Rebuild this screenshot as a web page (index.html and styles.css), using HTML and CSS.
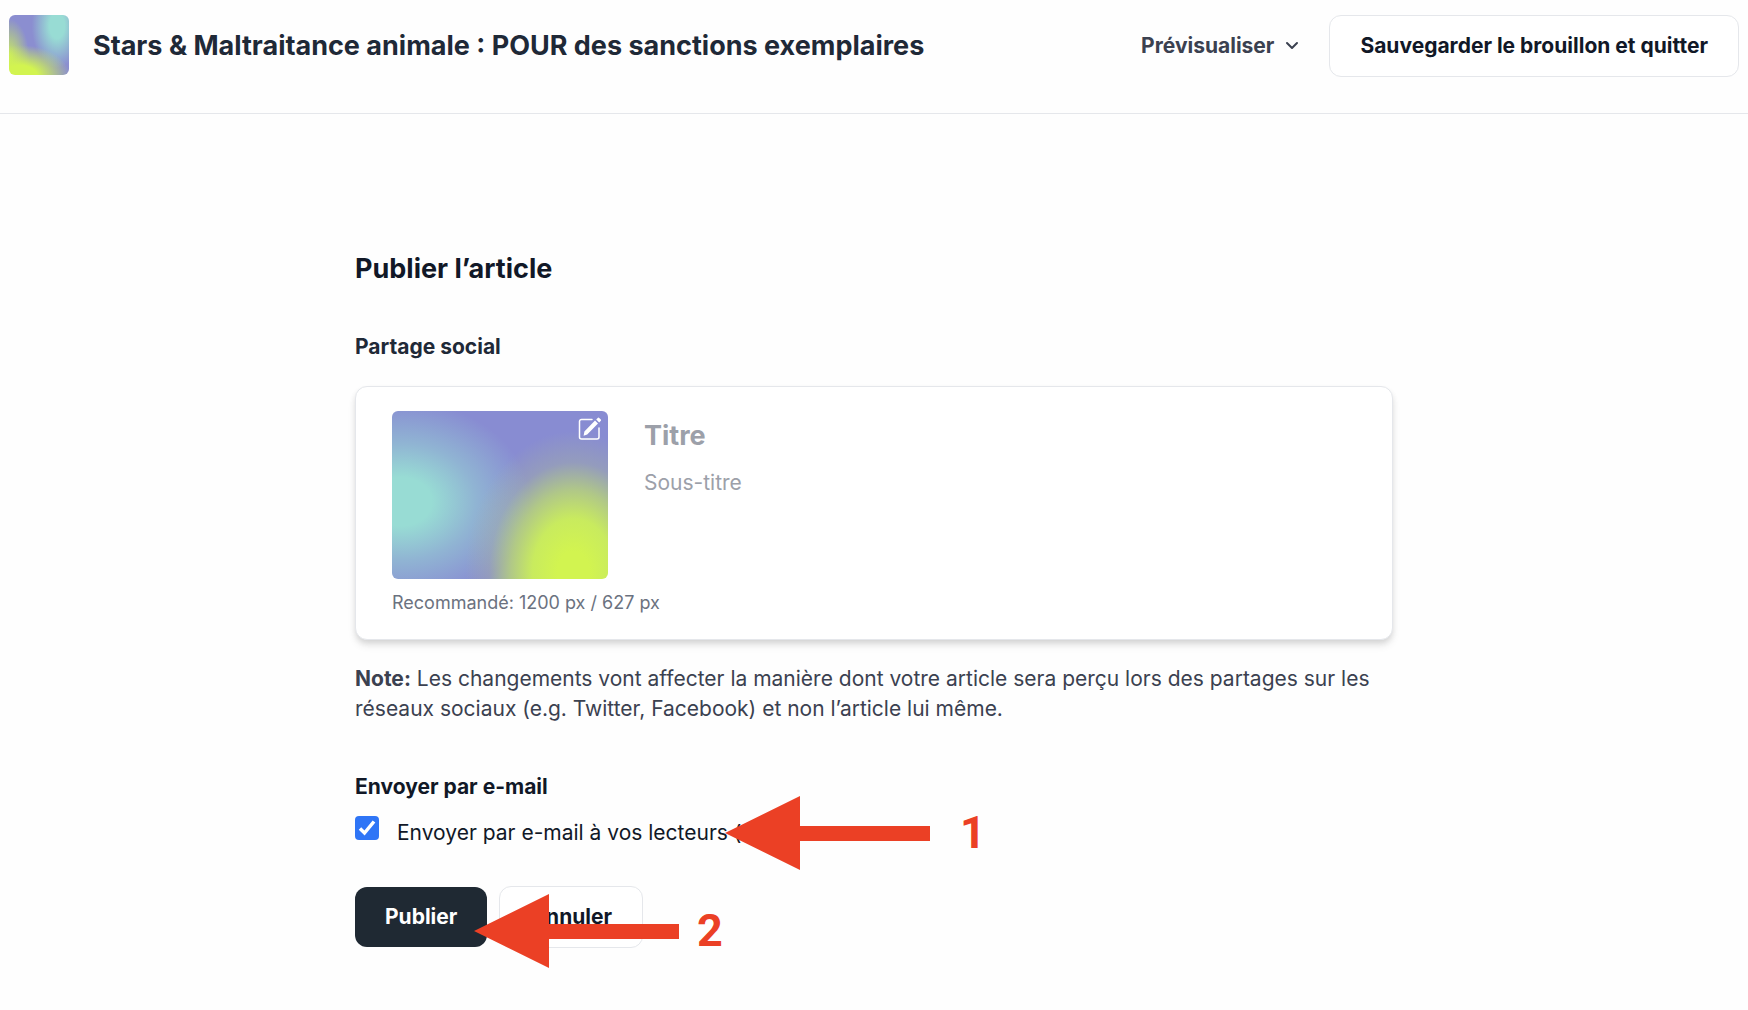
FILE: index.html
```
<!DOCTYPE html>
<html lang="fr">
<head>
    <meta charset="UTF-8">
    <meta name="viewport" content="width=device-width, initial-scale=1.0">
    <title>Publier l’article</title>
    <link rel="stylesheet" href="styles.css">
</head>
<body>

<header class="topbar">
    <div class="logo"></div>
    <h1>Stars &amp; Maltraitance animale : POUR des sanctions exemplaires</h1>
    <button type="button" class="preview-btn">
        Prévisualiser
        <svg class="chevron" viewBox="0 0 14 10" aria-hidden="true"><path d="M2 2l5 5 5-5"/></svg>
    </button>
    <button type="button" class="btn">Sauvegarder le brouillon et quitter</button>
</header>

<main>
    <h2>Publier l’article</h2>

    <!-- Partage social -->
    <h3 class="share-title">Partage social</h3>
    <section class="card">
        <div class="cover">
            <button type="button" class="edit-btn" aria-label="Modifier l’image">
                <svg viewBox="0 0 24 24" aria-hidden="true">
                    <path class="frame" d="M14 2.5H3.5a2 2 0 0 0-2 2V20a2 2 0 0 0 2 2H19a2 2 0 0 0 2-2V11"/>
                    <path class="pen" d="M17 3.6l3 3L9.2 17.4 5.6 18.8l.8-4.2zM18.2 2.4L20 .8q.6-.4 1.2.1l1.6 1.6q.6.6.1 1.2l-1.7 1.7z"/>
                </svg>
            </button>
        </div>
        <div class="fields">
            <input type="text" class="field-title" placeholder="Titre" aria-label="Titre">
            <input type="text" class="field-subtitle" placeholder="Sous-titre" aria-label="Sous-titre">
        </div>
        <p class="hint">Recommandé: 1200 px / 627 px</p>
    </section>
    <p class="note"><strong>Note:</strong> Les changements vont affecter la manière dont votre article sera perçu lors des partages sur les réseaux sociaux (e.g. Twitter, Facebook) et non l’article lui même.</p>

    <!-- Envoi par e-mail -->
    <h3 class="mail-title">Envoyer par e-mail</h3>
    <div class="mail-row">
        <input type="checkbox" id="sendMail" checked>
        <label for="sendMail">Envoyer par e-mail à vos lecteurs (</label>
        <div class="step step-mail">
            <svg class="arrow" viewBox="0 0 205 74" aria-hidden="true"><path d="M0 37L75 0v30h130v15H75v29z"/></svg>
            <span>1</span>
        </div>
    </div>

    <div class="actions">
        <button type="button" class="btn btn-dark">Publier</button>
        <button type="button" class="btn">Annuler</button>
        <div class="step step-publish">
            <svg class="arrow" viewBox="0 0 205 74" aria-hidden="true"><path d="M0 37L75 0v30h130v15H75v29z"/></svg>
            <span>2</span>
        </div>
    </div>
</main>

</body>
</html>
```

FILE: styles.css
```
* {
    box-sizing: border-box;
}

body {
    margin: 0;
    font-family: Inter, "Liberation Sans", sans-serif;
    font-size: 21px;
    line-height: 30px;
    color: #111827;
    background-color: #fefefe;
}

h1, h2, h3, p {
    margin: 0;
}

button, input {
    font-family: inherit;
    font-size: inherit;
    line-height: inherit;
    color: inherit;
}

/* 상단 바 */
.topbar {
    display: flex;
    align-items: center;
    padding: 15px 9px 36px;
    border-bottom: 1px solid #e5e7eb;
}

.topbar h1 {
    flex: 1;
    margin-left: 24px;
    font-size: 27px;
    line-height: 36px;
    font-weight: 700;
    color: #1f2937;
}

.logo {
    align-self: flex-start;
    width: 60px;
    height: 60px;
    border-radius: 6px;
    background:
        radial-gradient(ellipse 84% 52% at 18% 102%, #d2f450 35%, rgba(210, 244, 80, 0) 100%),
        radial-gradient(ellipse 34% 66% at 0% 72%, rgba(205, 240, 90, 0.9) 10%, rgba(190, 220, 120, 0) 100%),
        radial-gradient(ellipse 42% 70% at 80% 18%, #98dcd4 30%, rgba(152, 220, 212, 0) 100%),
        #8b8ed0;
}

.preview-btn {
    display: flex;
    align-items: center;
    gap: 11px;
    margin-right: 30px;
    padding: 0;
    border: none;
    background: none;
    font-weight: 700;
    color: #3b4150;
    cursor: pointer;
}

.chevron {
    width: 14px;
    height: 10px;
    fill: none;
    stroke: #3b4150;
    stroke-width: 2;
    stroke-linecap: round;
    stroke-linejoin: round;
}

.btn {
    padding: 15px 30px;
    border: 1px solid #e5e7eb;
    border-radius: 12px;
    background-color: #fff;
    font-weight: 700;
    cursor: pointer;
}

.btn-dark {
    border: none;
    background-color: #1f2933;
    color: #fff;
}

/* 본문 */
main {
    max-width: 1038px;
    margin: 0 auto;
    padding: 137px 0 60px;
}

h2 {
    font-size: 27px;
    line-height: 36px;
}

h3 {
    font-size: 21px;
}

.share-title {
    margin: 45px 0 24px;
    color: #1f2937;
}

.card {
    display: grid;
    grid-template-columns: 216px 1fr;
    column-gap: 36px;
    padding: 24px 36px 21px;
    border: 1px solid #e5e7eb;
    border-radius: 12px;
    background-color: #fff;
    box-shadow: 0 6px 9px -1px rgba(0, 0, 0, 0.1), 0 3px 6px -1px rgba(0, 0, 0, 0.1);
}

.cover {
    display: flex;
    justify-content: flex-end;
    align-items: flex-start;
    height: 168px;
    padding: 6px;
    border-radius: 6px;
    background:
        radial-gradient(ellipse 50% 84% at 84% 96%, #d2f450 15%, rgba(204, 240, 88, 0.95) 38%, rgba(190, 220, 110, 0.75) 58%, rgba(170, 185, 150, 0.35) 78%, rgba(150, 155, 190, 0) 100%),
        radial-gradient(ellipse 60% 60% at 4% 54%, #98dcd4 24%, rgba(152, 220, 212, 0.5) 58%, rgba(152, 220, 212, 0) 100%),
        #888cd2;
}

.edit-btn {
    display: flex;
    padding: 0;
    border: none;
    background: none;
    cursor: pointer;
}

.edit-btn svg {
    width: 24px;
    height: 24px;
}

.edit-btn .frame {
    fill: none;
    stroke: #fff;
    stroke-width: 1.5;
    stroke-linecap: round;
}

.edit-btn .pen {
    fill: #fff;
}

.fields {
    display: flex;
    flex-direction: column;
    gap: 15px;
    padding-top: 6px;
}

.fields input {
    width: 100%;
    padding: 0;
    border: none;
    outline: none;
    background: none;
}

.fields input::placeholder {
    color: #9ca0a9;
    opacity: 1;
}

.fields .field-title {
    height: 36px;
    font-size: 27px;
    font-weight: 700;
}

.fields .field-subtitle {
    height: 30px;
}

.hint {
    grid-column: 1 / -1;
    margin-top: 9px;
    font-size: 18px;
    color: #6b7280;
}

.note {
    margin-top: 24px;
    color: #3b4150;
}

.mail-title {
    margin: 48px 0 14px;
}

.mail-row {
    display: flex;
    align-items: flex-start;
    position: relative;
}

.mail-row input {
    appearance: none;
    width: 24px;
    height: 24px;
    margin: 0 18px 0 0;
    border-radius: 4px;
    background: #2f75f6 url("data:image/svg+xml,%3Csvg xmlns='http://www.w3.org/2000/svg' viewBox='0 0 24 24'%3E%3Cpath d='M5 12.5l4.5 4.5L19 5.5' fill='none' stroke='white' stroke-width='3.5'/%3E%3C/svg%3E");
}

.mail-row label {
    margin-top: 2px;
}

.actions {
    display: flex;
    align-items: center;
    gap: 12px;
    margin-top: 38px;
    position: relative;
}

/* 단계 표시 화살표 */
.step {
    display: flex;
    align-items: center;
    position: absolute;
    font-family: Roboto, "Liberation Sans", sans-serif;
    font-size: 45px;
    line-height: 48px;
    font-weight: 700;
    color: #eb4025;
    pointer-events: none;
}

.step-mail {
    top: -20px;
    left: 370px;
    gap: 30px;
}

.step-publish {
    top: 8px;
    left: 119px;
    gap: 18px;
}

.arrow {
    width: 205px;
    height: 74px;
    fill: #eb4025;
}
```
